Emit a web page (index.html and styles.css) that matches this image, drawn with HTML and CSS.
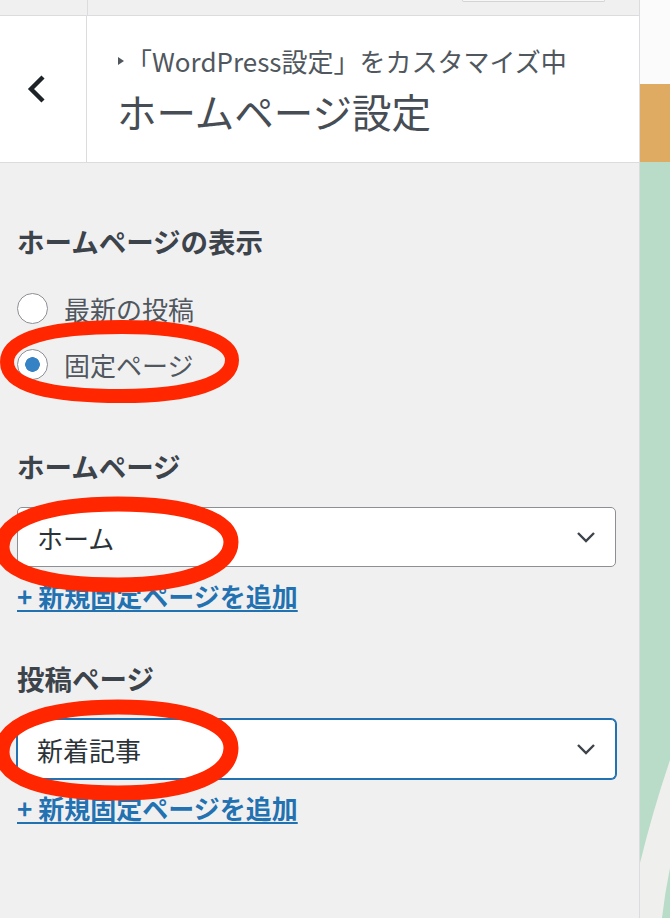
FILE: index.html
```html
<!DOCTYPE html>
<html lang="ja">
<head>
    <meta charset="UTF-8">
    <meta name="viewport" content="width=device-width, initial-scale=1.0">
    <title>ホームページ設定</title>
    <link rel="stylesheet" href="styles.css">
</head>
<body>
    <div class="app">
        <aside class="sidebar">
            <div class="topbar">
                <div class="topbar-left"></div>
                <div class="topbar-right"><span class="topbar-btn"></span></div>
            </div>
            <div class="header">
                <button class="back" aria-label="戻る">
                    <svg width="20" height="30" viewBox="0 0 20 30">
                        <polyline points="16,3 4,15 16,27" fill="none" stroke="#1d2327" stroke-width="4.4" stroke-linejoin="miter"/>
                    </svg>
                </button>
                <div class="titles">
                    <div class="crumb">
                        <svg class="crumb-arrow" width="8" height="10" viewBox="0 0 8 10"><polygon points="1,1 7,5 1,9" fill="#50575e"/></svg>「WordPress設定」をカスタマイズ中
                    </div>
                    <h2 class="title">ホームページ設定</h2>
                </div>
            </div>
            <div class="controls">
                <section class="control control-radio">
                    <h3 class="control-title">ホームページの表示</h3>
                    <label class="radio-row"><input type="radio" name="show_on_front" value="posts"> 最新の投稿</label>
                    <label class="radio-row"><input type="radio" name="show_on_front" value="page" checked> 固定ページ</label>
                </section>
                <section class="control control-select">
                    <h3 class="control-title">ホームページ</h3>
                    <div class="select">
                        <span>ホーム</span>
                        <svg width="20" height="12" viewBox="0 0 20 12"><polyline points="2,2 10,10 18,2" fill="none" stroke="#3c434a" stroke-width="2.4"/></svg>
                    </div>
                    <a class="add-link" href="#">+ 新規固定ページを追加</a>
                </section>
                <section class="control control-select">
                    <h3 class="control-title">投稿ページ</h3>
                    <div class="select is-focused">
                        <span>新着記事</span>
                        <svg width="20" height="12" viewBox="0 0 20 12"><polyline points="2,2 10,10 18,2" fill="none" stroke="#3c434a" stroke-width="2.4"/></svg>
                    </div>
                    <a class="add-link" href="#">+ 新規固定ページを追加</a>
                </section>
            </div>
        </aside>
        <div class="preview">
            <div class="preview-top"></div>
            <div class="preview-band"></div>
            <div class="preview-body">
                <svg width="30" height="756" viewBox="0 0 30 756">
                    <path d="M30 598 Q 13 648 0 701 L0 756 L22 756 Q 25 730 30 706 Z" fill="#efefed"/>
                </svg>
            </div>
        </div>
        <svg class="marks" width="670" height="918" viewBox="0 0 670 918" fill="none" stroke="#ff2600">
            <!-- hand drawn style rings, a bit blunter than a true ellipse -->
            <path stroke-width="14" d="M7 362 C7 338 50 327 122 327 C192 327 232 340 232 360 C232 382 192 396 122 396 C50 396 7 386 7 362 Z"/>
            <path stroke-width="15" d="M2 547 C2 520 45 504 118 504 C190 504 231 520 231 542 C231 566 190 585 118 585 C45 585 2 572 2 547 Z"/>
            <path stroke-width="15" d="M2 752 C2 724 45 707 118 707 C190 707 231 724 231 748 C231 774 190 793 118 793 C45 793 2 779 2 752 Z"/>
        </svg>
    </div>
</body>
</html>
```

FILE: styles.css
```css
body {
    margin: 0;
    font-family: "Noto Sans CJK JP", "Noto Sans", sans-serif;
    background: #f0f0f1;
}

.app {
    position: relative;
    display: flex;
    width: 670px;
    height: 918px;
    overflow: hidden;
}

.sidebar {
    width: 639px;
    border-right: 1px solid #dcdcde;
    background: #f0f0f1;
    flex-shrink: 0;
}

.topbar {
    display: flex;
    height: 15px;
    border-bottom: 1px solid #dcdcde;
}

.topbar-left {
    width: 87px;
    border-right: 1px solid #dcdcde;
}

.topbar-right {
    flex: 1;
    display: flex;
    justify-content: flex-end;
    padding-right: 34px;
}

.topbar-btn {
    width: 141px;
    height: 1px;
    background: #f6f7f7;
    border: 1px solid #d4d4d6;
    border-top: 0;
    border-radius: 0 0 3px 3px;
}

.header {
    display: flex;
    height: 146px;
    background: white;
    border-bottom: 1px solid #dcdcde;
}

.back {
    width: 87px;
    border: none;
    border-right: 1px solid #dcdcde;
    background: white;
    display: flex;
    align-items: center;
    padding: 0 0 0 27px;
}

.titles {
    padding: 29px 0 0 30px;
}

.crumb {
    display: flex;
    align-items: center;
    font-size: 26px;
    line-height: 32px;
    color: #50575e;
}

.crumb-arrow {
    margin-right: 1px;
}

.title {
    margin: 10px 0 0;
    font-size: 39.5px;
    line-height: 48px;
    font-weight: 400;
    color: #474d54;
}

.controls {
    padding: 60px 23px 0 17px;
}

.control-title {
    margin: 0;
    font-size: 27.5px;
    line-height: 36px;
    font-weight: 700;
    color: #3c434a;
}

.control-radio {
    margin-bottom: 56px;
}

.control-radio .control-title {
    margin-bottom: 21px;
}

.control-select {
    margin-bottom: 47px;
}

.radio-row {
    display: flex;
    align-items: center;
    gap: 16px;
    height: 56px;
    font-size: 26px;
    color: #50575e;
}

.radio-row input {
    appearance: none;
    margin: 0;
    width: 31px;
    height: 31px;
    border: 1px solid #8c8f94;
    border-radius: 50%;
    background: white;
}

.radio-row input:checked {
    background: radial-gradient(circle, #3582c4 0 7px, white 7.6px);
}

.select {
    display: flex;
    align-items: center;
    justify-content: space-between;
    box-sizing: border-box;
    height: 60px;
    margin-top: 23px;
    padding: 0 19px;
    background: white;
    border: 1px solid #8c8f94;
    border-radius: 5px;
    font-size: 26px;
    color: #2c3338;
}

.select.is-focused {
    border-color: #2271b1;
    box-shadow: 0 0 0 1px #2271b1;
}

.add-link {
    display: inline-block;
    margin-top: 12px;
    font-size: 26px;
    line-height: 34px;
    font-weight: 700;
    color: #2271b1;
    text-decoration: underline;
    text-underline-offset: 3px;
}

.preview {
    flex: 1;
    display: flex;
    flex-direction: column;
}

.preview-top {
    height: 84px;
    background: #fbfbfb;
}

.preview-band {
    height: 78px;
    background: #dfab63;
}

.preview-body {
    flex: 1;
    background: #b8dcc7;
}

.preview-body svg {
    display: block;
}

.marks {
    position: absolute;
    left: 0;
    top: 0;
    pointer-events: none;
}
```
